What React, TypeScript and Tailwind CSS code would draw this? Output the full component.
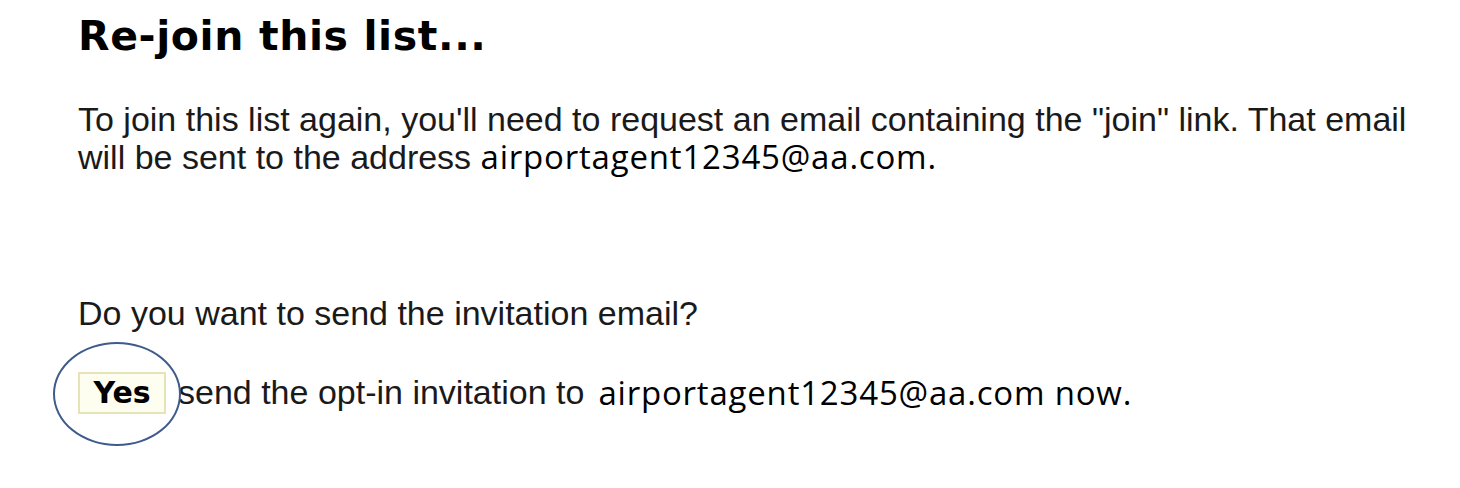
export default function App() {
  const email = "airportagent12345@aa.com";
  return (
    <div className="w-[1460px] h-[488px] bg-white overflow-hidden pl-[78px] pt-[12px] text-black">
      <h1 className="font-['DejaVu_Sans',Verdana,sans-serif] font-bold text-[41px] leading-[48px] tracking-[0.6px]">
        Re-join this list...
      </h1>
      <p className="mt-[40px] w-[1350px] font-['Liberation_Sans',Arial,sans-serif] text-[34px] leading-[38px] text-[#1a1a1a]">
        To join this list again, you'll need to request an email containing the "join" link. That email will be sent to the address{" "}
        <span className="font-['Open_Sans',sans-serif] text-[33px] leading-[38px] tracking-[0.8px] text-black">{email}.</span>
      </p>
      <p className="mt-[118px] font-['Liberation_Sans',Arial,sans-serif] text-[34px] leading-[38px] text-[#1a1a1a]">
        Do you want to send the invitation email?
      </p>
      <div className="mt-[35px] flex items-center">
        <div className="relative">
          <span className="flex h-[42px] w-[88px] items-center justify-center border-2 border-[#e4e4b8] bg-[#fdfdf0] font-['DejaVu_Sans',Verdana,sans-serif] font-bold text-[30px]">
            Yes
          </span>
          <div className="absolute left-[-25px] top-[-30px] h-[104px] w-[128px] rounded-[50%] border-2 border-[#3e5b8c]" />
        </div>
        <span className="ml-[12px] font-['Liberation_Sans',Arial,sans-serif] text-[34px] text-[#1a1a1a]">
          send the opt-in invitation to
        </span>
        <span className="ml-[14px] font-['Open_Sans',sans-serif] text-[33px] tracking-[0.8px]">{email} now.</span>
      </div>
    </div>
  );
}
